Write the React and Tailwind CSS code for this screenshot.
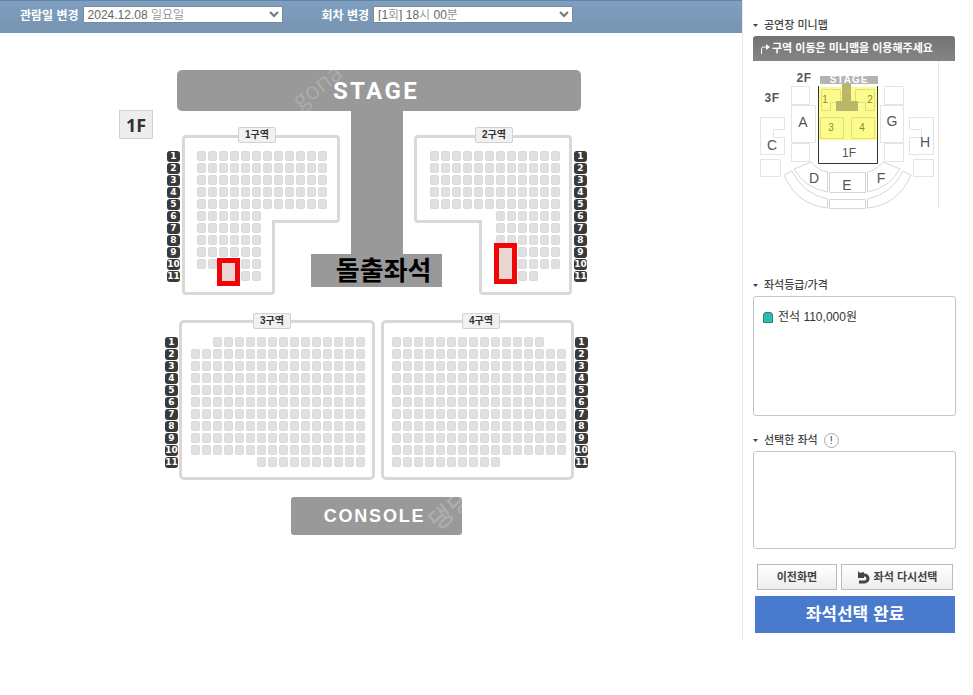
import React, { useState } from 'react';
import clsx from 'clsx';

const ROWS = [1, 2, 3, 4, 5, 6, 7, 8, 9, 10, 11];

// each row is [first seat column, last seat column]
const fill = (n, range) => Array(n).fill(range);

const ZONES = {
  z1: {
    name: '1구역',
    cols: 12,
    rows: [...fill(5, [1, 12]), ...fill(5, [1, 6]), [3, 6]],
    box: 'w-[158px] pl-[15px] pt-4',
    tag: 'left-14',
    outline: 'M4 1.5H154Q156.500 1.500 156.500 4V84Q156.500 86.500 154 86.500H91.500V156Q91.500 158.500 89 158.500H4Q1.500 158.500 1.500 156V4Q1.500 1.500 4 1.500Z',
    mark: 'left-[35px] top-[123px] h-7',
  },
  z2: {
    name: '2구역',
    cols: 12,
    rows: [...fill(5, [1, 12]), ...fill(5, [7, 12]), [7, 10]],
    box: 'w-[158px] pl-4 pt-4',
    tag: 'left-[61px]',
    outline: 'M4 1.5H154Q156.500 1.500 156.500 4V156Q156.500 158.500 154 158.500H69Q66.500 158.500 66.500 156V86.500H4Q1.500 86.500 1.500 84V4Q1.500 1.500 4 1.500Z',
    mark: 'left-20 top-[108px] h-[41px]',
  },
  z3: {
    name: '3구역',
    cols: 16,
    rows: [[3, 16], ...fill(9, [1, 16]), [7, 16]],
    box: 'w-[196px] rounded-[5px] border-3 border-[#d8d8d8] pl-[9px] pt-[14px]',
    tag: 'left-[71px]',
  },
  z4: {
    name: '4구역',
    cols: 16,
    rows: [[1, 14], ...fill(9, [1, 16]), [1, 10]],
    box: 'w-[193px] rounded-[5px] border-3 border-[#d8d8d8] pl-2 pt-[14px]',
    tag: 'left-[78px]',
  },
};

function RowNumbers({ className }) {
  return (
    <ol className={clsx('flex w-[13px] shrink-0 flex-col gap-px', className)}>
      {ROWS.map((n) => (
        <li
          key={n}
          className="flex h-[11px] items-center justify-center rounded-[3px] bg-[#3a3a3a] font-['DejaVu_Sans',sans-serif] text-[9px] font-bold leading-none text-white"
        >
          {n}
        </li>
      ))}
    </ol>
  );
}

function Zone({ zone }) {
  return (
    <section aria-label={zone.name} className={clsx('relative h-40 shrink-0', zone.box)}>
      {zone.outline && (
        <svg className="pointer-events-none absolute left-0 top-0" width="158" height="160" fill="none">
          <path d={zone.outline} stroke="#d8d8d8" strokeWidth="3" />
        </svg>
      )}
      <h2
        className={clsx(
          'absolute flex h-4 w-[38px] items-center justify-center rounded-[2px] border border-[#d2d2d2] bg-[#f1f1f1] text-[10px] font-bold leading-none text-[#333]',
          zone.outline ? '-top-2' : '-top-[10px]',
          zone.tag
        )}
      >
        {zone.name}
      </h2>
      <div className="flex flex-col gap-0.5">
        {zone.rows.map(([from, to], r) => (
          <div key={r} className="flex gap-0.5">
            {Array.from({ length: to }, (_, c) =>
              c + 1 < from ? (
                <span key={c} className="h-[10px] w-[9px]" />
              ) : (
                <button
                  key={c}
                  type="button"
                  aria-label={`${zone.name} ${r + 1}열 ${c + 1}번`}
                  className="h-[10px] w-[9px] rounded-[2px] border border-[#dadada] bg-[#e0e0e0]"
                />
              )
            )}
          </div>
        ))}
      </div>
      {zone.mark && <span className={clsx('absolute w-[23px] border-[5px] border-[#f00606] bg-[#ead6d3]', zone.mark)} />}
    </section>
  );
}

function Hall() {
  return (
    <div className="flex justify-center pr-[34px] pt-[37px]">
      <div className="mt-10 flex h-[29px] w-[34px] shrink-0 items-center justify-center border border-[#d2d2d2] bg-[#ededed] font-['Open_Sans',sans-serif] text-lg font-bold text-[#333]">
        1F
      </div>
      <div className="w-[436px] shrink-0">
        <div className="relative ml-6 mr-2 flex h-[41px] items-center justify-center overflow-hidden rounded-[5px] bg-[#999] pr-1.5 font-['Roboto',sans-serif] text-2xl font-bold tracking-widest text-white">
          <span aria-hidden="true" className="absolute left-[112px] top-0 -rotate-38 select-none font-['Open_Sans',sans-serif] text-2xl font-normal tracking-normal text-white/20">
            gona
          </span>
          STAGE
        </div>

        <div className="flex h-[209px] items-start pl-[14px]">
          <RowNumbers className="mt-10" />
          <div className="ml-0.5 mt-6 shrink-0">
            <Zone zone={ZONES.z1} />
          </div>
          <div className="ml-[11px] mr-[11px] flex w-13 shrink-0 flex-col items-center">
            <div className="h-[143px] w-13 bg-[#999]" />
            <div className="mr-0.5 flex h-[33px] w-[131px] shrink-0 items-center justify-end bg-[#999] pr-[10px] text-[26px] font-bold leading-none text-black">
              돌출좌석
            </div>
          </div>
          <div className="mt-6 shrink-0">
            <Zone zone={ZONES.z2} />
          </div>
          <RowNumbers className="ml-0.5 mt-10" />
        </div>

        <div className="flex items-start pl-3">
          <RowNumbers className="mr-px mt-[17px]" />
          <Zone zone={ZONES.z3} />
          <div className="ml-1.5">
            <Zone zone={ZONES.z4} />
          </div>
          <RowNumbers className="ml-px mt-[17px]" />
        </div>

        <div className="relative ml-[138px] mt-[17px] flex h-[38px] w-[171px] items-center justify-center overflow-hidden rounded-[3px] bg-[#999] pr-1 font-['Liberation_Sans',sans-serif] text-lg font-bold tracking-widest text-white">
          CONSOLE
          <span aria-hidden="true" className="absolute -right-3 -top-1 -rotate-38 select-none whitespace-nowrap text-2xl font-bold tracking-normal text-white/20">
            댕댕
          </span>
        </div>
      </div>
    </div>
  );
}

function TopSelect({ id, label, options }) {
  const [value, setValue] = useState(options[0]);
  return (
    <div className="flex items-start gap-1">
      <label htmlFor={id} className="whitespace-nowrap pt-0.5 text-xs font-bold text-white">
        {label}
      </label>
      <div className="relative">
        <select
          id={id}
          value={value}
          onChange={(e) => setValue(e.target.value)}
          className="block h-[17px] w-[200px] appearance-none border border-[#7d8a97] bg-white pl-1 text-xs font-light leading-none text-[#666]"
        >
          {options.map((o) => (
            <option key={o}>{o}</option>
          ))}
        </select>
        <svg className="pointer-events-none absolute right-1 top-[5px]" width="10" height="7" fill="none">
          <path d="M1 1l4 4 4-4" stroke="#777" strokeWidth="2" />
        </svg>
      </div>
    </div>
  );
}

function MiniMap() {
  return (
    <svg
      viewBox="0 1 202 150"
      className="block h-[150px] w-[202px] font-['Liberation_Sans',sans-serif]"
      fill="none"
      role="img"
      aria-label="공연장 미니맵"
    >
      <path d="M185.500 0V149" stroke="#e6e6e6" />
      <g stroke="#e4e4e4">
        <path d="M38.500 26.500h18v18h-18zM38.500 45.500h24v37h-24zM38.500 83.500h18v18h-18z" />
        <path d="M131.500 26.500h19v18h-19zM127.500 45.500h23v37h-23zM131.500 83.500h19v18h-19z" />
        <path d="M7.500 57.500h24v12h-11v8h11v17h-24zM7.500 99.500h20v17h-20z" />
        <path d="M156.500 57.500h24v37h-24v-17h12v-8h-12zM160.500 99.500h20v17h-20z" />
        <path d="M41 109L58 102Q66 111 74.500 112V132Q52 128 41 109ZM31 115L39 111Q50 134 74.500 139V148Q44 145 31 115Z" stroke="#d6d6d6" />
        <path d="M147 109L130 102Q122 111 114.500 112V132Q136 128 147 109ZM158 115L150 111Q139 134 114.500 139V148Q145 145 158 115Z" stroke="#d6d6d6" />
        <path d="M76.500 112.500h36v20h-36zM76.500 139.500h36v9h-36z" stroke="#d6d6d6" />
      </g>
      <path d="M66 27h58v53H66z" fill="#fcfc8e" />
      <path d="M68.500 29.500h19v13h-10v8h-9zM121.500 29.500h-19v13h10v8h9zM67.500 57.500h23v21h-23zM98.500 57.500h23v21h-23z" stroke="#e3e070" />
      <path d="M89 24h9v17h7v10H83V41h6z" fill="#bbb768" />
      <path d="M65.500 26v77.500h59V26" stroke="#333" />
      <path d="M67 16h58v8H67z" fill="#b3b3b3" />
      <g textAnchor="middle" fill="#555" fontSize="14">
        <text x="96" y="23" fill="#fff" fontSize="10" fontWeight="700" className="tracking-widest">STAGE</text>
        <text x="51" y="22" fontSize="12" fontWeight="700" className="tracking-wider">2F</text>
        <text x="19" y="42" fontSize="12" fontWeight="700" className="tracking-wider">3F</text>
        <text x="72" y="43" fill="#8a8840" fontSize="10">1</text>
        <text x="117" y="43" fill="#8a8840" fontSize="10">2</text>
        <text x="78" y="71" fill="#8a8840" fontSize="10">3</text>
        <text x="109" y="71" fill="#8a8840" fontSize="10">4</text>
        <text x="96" y="97" fontSize="12">1F</text>
        <text x="50" y="67">A</text>
        <text x="139" y="66">G</text>
        <text x="19" y="90">C</text>
        <text x="172" y="87">H</text>
        <text x="61" y="123">D</text>
        <text x="94" y="130">E</text>
        <text x="128" y="123">F</text>
      </g>
    </svg>
  );
}

function PanelTitle({ children }) {
  return (
    <h2 className="mb-px flex h-5 items-center gap-1.5 text-[11px] font-medium text-[#444]">
      <svg width="5" height="3">
        <path d="M0 0h5L2.500 3z" fill="#444" />
      </svg>
      {children}
    </h2>
  );
}

function Sidebar() {
  return (
    <aside className="w-[231px] shrink-0 self-start border-l border-[#e4e8ec] pb-[7px] pl-[10px] pr-[17px] pt-[15px]">
      <PanelTitle>공연장 미니맵</PanelTitle>
      <p className="mr-px flex h-[25px] items-center gap-0.5 rounded-t-[3px] bg-linear-to-b from-[#737373] to-[#858585] pl-[7px] text-[11px] font-bold text-white">
        <svg width="10" height="10" fill="none">
          <path d="M1.500 10V5Q1.500 3 3.500 3H7" stroke="#fff" />
          <path d="M6 0l4 3-4 3z" fill="#fff" />
        </svg>
        구역 이동은 미니맵을 이용해주세요
      </p>
      <MiniMap />

      <div className="mt-16">
        <PanelTitle>좌석등급/가격</PanelTitle>
        <ul className="h-[120px] rounded-[3px] border border-[#c4c4c4] px-[9px] py-[10px] text-xs text-[#333]">
          <li className="flex h-5 items-center gap-[5px]">
            <span className="h-[11px] w-[10px] rounded-t-[3px] border border-[#3a7d78] bg-[#28bfb2]" />
            전석 110,000원
          </li>
        </ul>
      </div>

      <div className="mt-[14px]">
        <PanelTitle>
          선택한 좌석
          <span className="flex size-[15px] items-center justify-center rounded-full border border-[#aaa] text-[11px] leading-none">!</span>
        </PanelTitle>
        <div className="h-[98px] rounded-[3px] border border-[#c4c4c4]" />
      </div>

      <div className="mt-[15px] flex gap-1 pl-1 pr-[3px] text-[11px] font-bold text-[#444]">
        <button type="button" className="h-[26px] w-20 border border-[#bbb] bg-linear-to-b from-white to-[#ededed]">
          이전화면
        </button>
        <button type="button" className="flex h-[26px] flex-1 items-center justify-center gap-1 border border-[#bbb] bg-linear-to-b from-white to-[#ededed]">
          <svg width="13" height="13" fill="none">
            <path d="M4 4H7.500A3.500 3.500 0 0 1 7.500 11H2" stroke="#444" strokeWidth="3" />
            <path d="M1 0l2 2 4-1v6H1z" fill="#444" />
          </svg>
          좌석 다시선택
        </button>
      </div>
      <div className="mt-1.5 pl-0.5 pr-px">
        <button type="button" className="h-[37px] w-full bg-[#4a7acd] text-[17px] font-bold text-white">
          좌석선택 완료
        </button>
      </div>
    </aside>
  );
}

export default function App() {
  return (
    <div className="flex min-h-screen bg-white font-['Liberation_Sans','Noto_Sans_CJK_KR',sans-serif]">
      <main className="min-w-0 flex-1">
        <header className="flex h-[33px] items-start gap-[39px] border-t border-[#6683a2] bg-linear-to-b from-[#7f9fc2] to-[#7794af] pl-5 pt-[5px]">
          <TopSelect id="date" label="관람일 변경" options={['2024.12.08 일요일']} />
          <TopSelect id="time" label="회차 변경" options={['[1회] 18시 00분']} />
        </header>
        <Hall />
      </main>
      <Sidebar />
    </div>
  );
}
